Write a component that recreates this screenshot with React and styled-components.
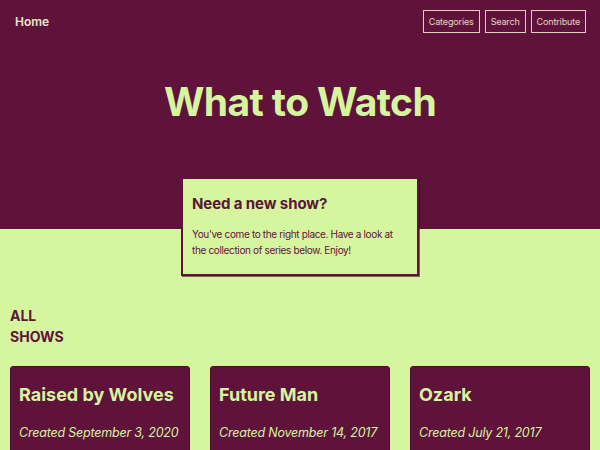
import React from "react";
import styled, { createGlobalStyle } from "styled-components";

const maroon = "#5f133b";
const lime = "#d5f59e";
const cream = "#f3e7c9";

const Global = createGlobalStyle`
  html, body { margin: 0; padding: 0; }
  body {
    background: ${lime};
    font-family: Inter, "Noto Sans", sans-serif;
    color: ${maroon};
  }
`;

const Header = styled.header`
  background: ${maroon};
  height: 229px;
  box-sizing: border-box;
`;

const Nav = styled.nav`
  display: flex;
  align-items: center;
  justify-content: space-between;
  height: 42px;
  padding: 0 14px 0 15px;
`;

const HomeLink = styled.a`
  color: ${cream};
  font-size: 12px;
  font-weight: 600;
  text-decoration: none;
`;

const NavButtons = styled.div`
  display: flex;
  gap: 5px;
`;

const NavButton = styled.a`
  color: ${cream};
  font-size: 9px;
  letter-spacing: -0.15px;
  border: 1px solid ${cream};
  height: 23px;
  box-sizing: border-box;
  display: flex;
  align-items: center;
  padding: 0 5px;
  text-decoration: none;
  opacity: 0.9;
`;

const Title = styled.h1`
  margin: 38px 0 0;
  text-align: center;
  color: ${lime};
  font-size: 39px;
  letter-spacing: -0.6px;
  font-weight: 700;
  line-height: 44px;
`;

const Intro = styled.section`
  width: 238px;
  margin: -52px auto 0;
  background: ${lime};
  border: 2px solid ${maroon};
  box-shadow: 1px 1px 0 rgba(60, 10, 30, 0.6);
  box-sizing: border-box;
  height: 99px;
  padding: 14px 9px;
`;

const IntroTitle = styled.h2`
  margin: 0;
  font-size: 15px;
  letter-spacing: -0.1px;
  font-weight: 700;
  line-height: 22px;
`;

const IntroText = styled.p`
  margin: 11px 0 0;
  font-size: 10px;
  letter-spacing: -0.35px;
  line-height: 16px;
`;

const Section = styled.main`
  padding: 29px 10px 0;
`;

const SectionTitle = styled.h3`
  margin: 0;
  width: 60px;
  font-size: 14px;
  font-weight: 700;
  line-height: 21px;
  text-transform: uppercase;
`;

const Grid = styled.div`
  margin-top: 19px;
  display: grid;
  grid-template-columns: repeat(3, 1fr);
  gap: 20px;
`;

const Card = styled.article`
  background: ${maroon};
  border-radius: 3px;
  border: 1px solid #4a0e2d;
  padding: 16px 8px 20px;
  height: 120px;
  color: ${lime};
`;

const CardTitle = styled.h4`
  margin: 0;
  font-size: 18px;
  font-weight: 700;
  line-height: 24px;
`;

const CardDate = styled.p`
  margin: 17px 0 0;
  font-size: 12.5px;
  letter-spacing: -0.2px;
  font-style: italic;
  line-height: 18px;
  white-space: nowrap;
`;

const shows = [
  { title: "Raised by Wolves", date: "September 3, 2020" },
  { title: "Future Man", date: "November 14, 2017" },
  { title: "Ozark", date: "July 21, 2017" },
];

export default function App() {
  return (
    <>
      <Global />
      <Header>
        <Nav>
          <HomeLink href="#">Home</HomeLink>
          <NavButtons>
            <NavButton href="#">Categories</NavButton>
            <NavButton href="#">Search</NavButton>
            <NavButton href="#">Contribute</NavButton>
          </NavButtons>
        </Nav>
        <Title>What to Watch</Title>
      </Header>
      <Intro>
        <IntroTitle>Need a new show?</IntroTitle>
        <IntroText>
          You've come to the right place. Have a look at the collection of series below. Enjoy!
        </IntroText>
      </Intro>
      <Section>
        <SectionTitle>All Shows</SectionTitle>
        <Grid>
          {shows.map((s) => (
            <Card key={s.title}>
              <CardTitle>{s.title}</CardTitle>
              <CardDate>Created {s.date}</CardDate>
            </Card>
          ))}
        </Grid>
      </Section>
    </>
  );
}
